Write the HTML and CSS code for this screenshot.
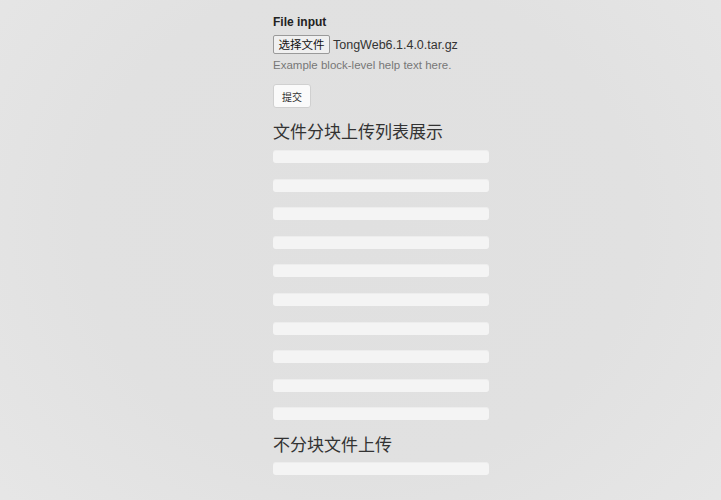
FILE: index.html
```html
<!DOCTYPE html>
<html lang="zh-CN">
<head>
<meta charset="utf-8">
<title>File upload</title>
<link rel="stylesheet" href="styles.css">
</head>
<body>
<div class="page">
  <form class="form">
    <div class="form-group">
      <label class="label">File input</label>
      <div class="file-row">
        <span class="file-btn">选择文件</span>
        <span class="file-name">TongWeb6.1.4.0.tar.gz</span>
      </div>
      <p class="help">Example block-level help text here.</p>
    </div>
    <button type="button" class="btn">提交</button>
  </form>
  <h3 class="title">文件分块上传列表展示</h3>
  <div class="bars">
    <div class="bar"></div>
    <div class="bar"></div>
    <div class="bar"></div>
    <div class="bar"></div>
    <div class="bar"></div>
    <div class="bar"></div>
    <div class="bar"></div>
    <div class="bar"></div>
    <div class="bar"></div>
    <div class="bar"></div>
  </div>
  <h3 class="title title-2">不分块文件上传</h3>
  <div class="bars">
    <div class="bar"></div>
  </div>
</div>
</body>
</html>
```

FILE: styles.css
```css
html, body {
  margin: 0;
  padding: 0;
}
body {
  width: 721px;
  height: 500px;
  overflow: hidden;
  background: radial-gradient(ellipse 70% 90% at 50% 45%, #e0e0e0 0%, #e1e1e1 55%, #e7e7e7 100%);
  font-family: "Liberation Sans", Arial, "Noto Sans CJK SC", sans-serif;
  color: #333;
}
.page {
  width: 216px;
  margin-left: 273px;
  padding-top: 14px;
}
.form {
  margin: 0;
}
.form-group {
  display: flex;
  flex-direction: column;
}
.label {
  font-weight: bold;
  font-size: 12px;
  line-height: 16px;
  color: #222;
}
.file-row {
  display: flex;
  align-items: center;
  margin-top: 5px;
  height: 19px;
}
.file-btn {
  box-sizing: border-box;
  height: 19px;
  width: 57px;
  border: 1px solid #9a9a9a;
  border-radius: 2px;
  background: #f0f0f0;
  font-family: "Noto Sans CJK SC", sans-serif;
  font-size: 11.5px;
  line-height: 17px;
  text-align: center;
  color: #111;
}
.file-name {
  margin-left: 3px;
  font-size: 12.5px;
  color: #333;
}
.help {
  margin: 4px 0 0;
  font-size: 11.5px;
  line-height: 15px;
  color: #777;
}
.btn {
  display: block;
  margin-top: 11px;
  box-sizing: border-box;
  width: 38px;
  height: 24px;
  padding: 0;
  border: 1px solid #d0d0d0;
  border-radius: 3px;
  background: #fafafa;
  font-family: "Noto Sans CJK SC", sans-serif;
  font-size: 10px;
  color: #333;
}
.title {
  margin: 12px 0 8px;
  font-family: "Noto Sans CJK SC", sans-serif;
  font-weight: normal;
  font-size: 17px;
  line-height: 22px;
  color: #333;
}
.title-2 {
  margin-top: 13px;
  margin-bottom: 7px;
}
.bars {
  display: flex;
  flex-direction: column;
  gap: 15.6px;
}
.bar {
  height: 13px;
  border-radius: 3px;
  background: #f4f4f4;
  box-shadow: inset 0 1px 1px rgba(0,0,0,0.03);
}
```
